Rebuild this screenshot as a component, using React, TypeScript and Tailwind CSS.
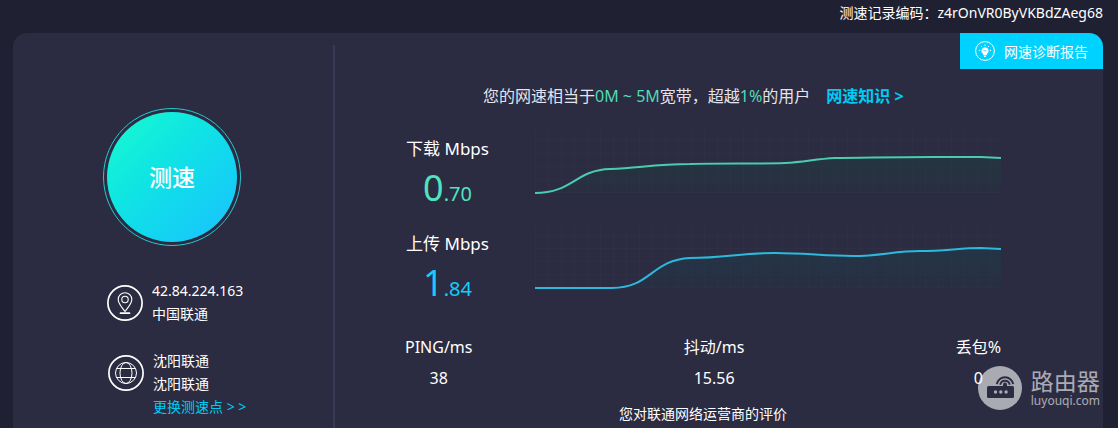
const downloadLine =
  "M0 61C38 61 40 38 75 37C105 36 118 32 155 32C190 31 220 32 250 31C270 30 280 27 300 26C330 26 350 25 399 25C420 25 440 25 446 25L466 26";
const uploadLine =
  "M0 61H77C116 61 116 33 155 31C190 31 205 26 240 26C270 26 290 29 318 29C345 29 360 24 385 24C410 24 425 21 446 21L466 22";

const stats = [
  { label: "PING/ms", value: "38" },
  { label: "抖动/ms", value: "15.56" },
  { label: "丢包%", value: "0" },
];

const SpeedChart = ({ id, line, color, shade }: { id: string; line: string; color: string; shade: string }) => {
  return (
    <svg className="flex-1 min-w-0 h-16" viewBox="0 0 466 64" preserveAspectRatio="none" fill="none" aria-hidden="true">
      <defs>
        <linearGradient id={id} x1="0" y1="20" x2="0" y2="62" gradientUnits="userSpaceOnUse">
          <stop offset="0" stopColor={shade} stopOpacity="0.6" />
          <stop offset="1" stopColor={shade} stopOpacity="0.15" />
        </linearGradient>
        <pattern id={`${id}-grid`} width="13" height="13" patternUnits="userSpaceOnUse" y="8">
          <path d="M0 .5H13M.5 0V13" stroke="#fff" strokeOpacity="0.016" />
        </pattern>
      </defs>
      <rect width="466" height="61" fill={`url(#${id}-grid)`} />
      <path d={`${line}V61H0Z`} fill={`url(#${id})`} />
      <path d={line} stroke={color} strokeWidth="2" />
    </svg>
  );
};

const SpeedRow = ({ id, label, whole, decimal, textClass, line, color, shade }: {
  id: string;
  label: string;
  whole: string;
  decimal: string;
  textClass: string;
  line: string;
  color: string;
  shade: string;
}) => {
  return (
    <div className="flex items-start gap-[45px] h-[95px]">
      <div className="w-[85px] shrink-0 text-center whitespace-nowrap">
        <p className="text-[17px] leading-[24px] pt-[5px]">{label}</p>
        <p className={`leading-[48px] pt-[3px] ${textClass}`}>
          <span className="text-[36px]">{whole}</span>
          <span className="text-[20px]">.{decimal}</span>
        </p>
      </div>
      <SpeedChart id={id} line={line} color={color} shade={shade} />
    </div>
  );
};

const BulbIcon = () => (
  <svg className="w-5 h-5" viewBox="0 0 20 20" fill="none" stroke="#fff" aria-hidden="true">
    <circle cx="10" cy="10" r="9.4" strokeWidth="1" />
    <path d="M10 6.3a3.7 3.7 0 0 0-2 6.800l.5 1.200h3l.5-1.200a3.700 3.700 0 0 0-2-6.800zM8.700 14.800h2.600l-.6 1.100h-1.400z" fill="#fff" stroke="none" />
    <path d="M8.600 9.800h2.800" stroke="#00d2ff" strokeWidth=".8" />
    <path d="M10 3.600v1.400M6 5l.9.9M14 5l-.9.9M3.900 9.400h1.300M14.800 9.400h1.300" strokeWidth="1" />
  </svg>
);

const PinIcon = () => (
  <svg className="w-9 h-9 shrink-0" viewBox="0 0 36 36" fill="none" stroke="#fff" aria-hidden="true">
    <circle cx="18" cy="18" r="17.1" strokeWidth="1.7" />
    <path d="M18 26.5c-2.600-3.800-6.800-7.600-6.800-12a6.800 6.800 0 0 1 13.600 0c0 4.400-4.200 8.200-6.800 12z" strokeWidth="1.100" />
    <circle cx="18" cy="14.500" r="3.200" strokeWidth="1.100" />
    <path d="M13.500 28.200h9" strokeWidth="1.700" strokeLinecap="round" />
  </svg>
);

const GlobeIcon = () => (
  <svg className="w-9 h-9 shrink-0" viewBox="0 0 36 36" fill="none" stroke="#fff" aria-hidden="true">
    <circle cx="18" cy="18" r="17.1" strokeWidth="1.7" />
    <g strokeWidth="1">
      <circle cx="18" cy="18" r="10.500" />
      <ellipse cx="18" cy="18" rx="6" ry="10.500" />
      <path d="M9 13.500h18M9 22.500h18" />
    </g>
  </svg>
);

const Watermark = () => (
  <div className="absolute right-[18px] top-[366px] flex items-center gap-[9px] text-white opacity-60">
    <svg className="w-11 h-11" viewBox="0 0 44 44" fill="none" aria-hidden="true">
      <circle cx="22" cy="22" r="22" fill="#fff" />
      <rect x="9" y="20" width="27" height="12" rx="1.500" fill="#2b2b41" />
      <g stroke="#2b2b41" strokeWidth="1.900">
        <path d="M18.800 18.200a8.300 8.300 0 0 1 16.400 0" />
        <path d="M22.200 18.700a4.900 4.900 0 0 1 9.600 0" />
      </g>
      <path d="M25 20v-1.500a2 2 0 0 1 4 0v1.500z" fill="#2b2b41" />
      <circle cx="17.500" cy="26" r="1.700" fill="#fff" />
      <circle cx="22.800" cy="26" r="1.700" fill="#fff" />
      <circle cx="28.100" cy="26" r="1.700" fill="#fff" />
    </svg>
    <div>
      <p className="text-[23px] leading-[26px]">路由器</p>
      <p className="text-[12px] leading-[14px]">luyouqi.com</p>
    </div>
  </div>
);

const App = () => {
  return (
    <main className="relative flex flex-col min-h-screen bg-[#1f2133] text-white font-['Noto_Sans','Noto_Sans_CJK_SC',sans-serif]">
      <p className="h-[33px] pr-[15px] text-right text-[14px] leading-[26px]">测速记录编码：z4rOnVR0ByVKBdZAeg68</p>
      <div className="flex flex-1 ml-[13px] mr-[15px] bg-[#2b2b41] rounded-t-[14px]">
        <section className="w-[320px] shrink-0 pt-[75px]">
          <button className="block ml-[90px] size-[138px] p-[3px] rounded-full border border-[#27c9cf]">
            <span className="flex items-center justify-center size-full rounded-full bg-linear-135 from-[#19fbcd] to-[#1cc0ff] text-[23px] font-medium">测速</span>
          </button>
          <div className="flex gap-[9px] pt-[33px] pl-[94px] text-[14px] leading-[23px]">
            <div className="pt-[6px]"><PinIcon /></div>
            <div>
              <p>42.84.224.163</p>
              <p>中国联通</p>
            </div>
          </div>
          <div className="flex gap-[9px] pt-[24px] pl-[95px] text-[14px] leading-[23px]">
            <div className="pt-[6px]"><GlobeIcon /></div>
            <div>
              <p>沈阳联通</p>
              <p>沈阳联通</p>
              <a href="#" className="block text-[#00cbf5]">更换测速点 &gt; &gt;</a>
            </div>
          </div>
        </section>
        <section className="flex flex-col flex-1 min-w-0 mt-[12px] border-l-2 border-[#3a3a57]">
          <button className="flex items-center gap-[9px] self-end -mt-[12px] h-9 px-[15px] bg-[#00d2ff] rounded-tr-[14px] text-[14px]">
            <BulbIcon />
            网速诊断报告
          </button>
          <p className="pt-[15px] pl-[148px] text-[16px] leading-[24px] text-[#e4e4ec] whitespace-nowrap">
            您的网速相当于<span className="text-[#4fdcb4]">0M ~ 5M</span>宽带，超越<span className="text-[#4fdcb4]">1%</span>的用户
            <a href="#" className="ml-4 font-bold text-[#00cbf5]">网速知识 &gt;</a>
          </p>
          <div className="pl-[70px] pr-[102px] pt-[24px]">
            <SpeedRow id="download" label="下载 Mbps" whole="0" decimal="70" textClass="text-[#4fe3c1]" line={downloadLine} color="#4accaf" shade="#1f3d40" />
            <SpeedRow id="upload" label="上传 Mbps" whole="1" decimal="84" textClass="text-[#14cdfa]" line={uploadLine} color="#2cb9dc" shade="#1d3c4a" />
            <dl className="flex justify-between pt-[14px] text-center text-[16px] leading-[22px]">
              {stats.map((stat) => (
                <div key={stat.label}>
                  <dt>{stat.label}</dt>
                  <dd className="pt-[9px]">{stat.value}</dd>
                </div>
              ))}
            </dl>
            <p className="pt-[14px] text-center text-[14px] leading-[22px]">您对联通网络运营商的评价</p>
          </div>
        </section>
      </div>
      <Watermark />
    </main>
  );
};

export default App;
